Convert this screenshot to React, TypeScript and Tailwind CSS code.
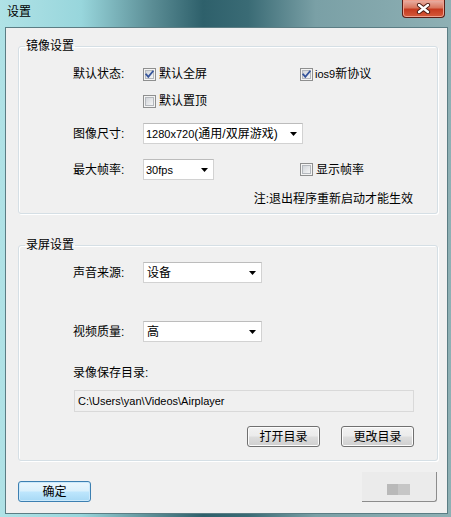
import React from "react";

function Check({ checked }: { checked?: boolean }) {
  return (
    <svg width="13" height="13" viewBox="0 0 13 13" className="shrink-0">
      <defs>
        <linearGradient id="cbg" x1="0" y1="0" x2="1" y2="1">
          <stop offset="0" stopColor="#cfd3d8" />
          <stop offset="1" stopColor="#f7f7f7" />
        </linearGradient>
      </defs>
      <rect x="0.5" y="0.5" width="12" height="12" fill="#f4f4f4" stroke="#8e8f8f" />
      <rect x="2.5" y="2.5" width="8" height="8" fill="url(#cbg)" stroke="#b4b8bd" strokeWidth="1" />
      {checked && (
        <path d="M3.2 6.4 L5.3 8.8 L9.8 3.4" fill="none" stroke="#35549b" strokeWidth="1.8" strokeLinecap="square" />
      )}
    </svg>
  );
}

function Arrow() {
  return (
    <svg width="7" height="4" viewBox="0 0 7 4" className="shrink-0">
      <polygon points="0,0 7,0 3.5,4" fill="#000" />
    </svg>
  );
}

function Select({ className, children }: { className: string; children: React.ReactNode }) {
  return (
    <div className={`h-[21px] bg-white border border-[#d2d2d2] border-t-[#bcbcbc] flex items-center justify-between pl-[2px] pr-[5px] ${className}`}>
      <span className="whitespace-nowrap">{children}</span>
      <Arrow />
    </div>
  );
}

function WinButton({ children, primary }: { children: React.ReactNode; primary?: boolean }) {
  return (
    <div
      className={
        primary
          ? "w-[73px] h-[21px] rounded-[3px] border border-[#3c7fb1] bg-[linear-gradient(180deg,#eaf6fd_0%,#d9f0fc_48%,#bee6fd_52%,#a7d9f5_100%)] shadow-[inset_0_0_0_1px_#cbe9fb] flex items-center justify-center"
          : "w-[73px] h-[21px] rounded-[3px] border border-[#707070] bg-[linear-gradient(180deg,#f2f2f2_0%,#ebebeb_48%,#dddddd_52%,#cfcfcf_100%)] shadow-[inset_0_0_0_1px_#fcfcfc] flex items-center justify-center"
      }
    >
      {children}
    </div>
  );
}

export default function App() {
  return (
    <div className="w-[451px] h-[517px] flex flex-col overflow-hidden bg-[linear-gradient(90deg,#b0e2e6_0%,#98d6dc_18%,#5a8c94_34%,#2e606b_45%,#3a6b75_55%,#7aa0a6_70%,#8eb0b4_100%)] font-['Liberation_Sans','Noto_Sans_CJK_SC',sans-serif] text-[12px] leading-[16px] text-black">
      {/* title bar */}
      <div className="h-[27px] shrink-0 flex items-start">
        <span className="ml-[7px] mt-[4px]">设置</span>
        <div className="ml-auto mr-[6px] w-[43px] h-[18px] rounded-b-[4px] border border-t-0 border-[#5a1d15] bg-[linear-gradient(180deg,#eab3a8_0%,#d9775f_45%,#c63a1f_55%,#d55a3a_100%)] shadow-[inset_0_0_0_1px_#f0a08e] flex items-center justify-center">
          <svg width="15" height="11" viewBox="0 0 15 11">
            <path d="M3 2 L12 9 M12 2 L3 9" stroke="#4a1a12" strokeWidth="4.2" strokeLinecap="round" />
            <path d="M3 2 L12 9 M12 2 L3 9" stroke="#ffffff" strokeWidth="2.4" strokeLinecap="round" />
          </svg>
        </div>
      </div>

      {/* client area */}
      <div className="ml-[5px] w-[443px] flex-1 mb-[3px] border border-[#5b7d84] bg-[#f0f0f0] pl-[12px] pt-[10px] flex flex-col">
        {/* group 1 */}
        <fieldset className="w-[420px] border border-[#d5dfe5] rounded-[3px] pb-[6px] shadow-[inset_1px_1px_0_#ffffff,1px_1px_0_#ffffff]">
          <legend className="ml-[6px] px-[1px] leading-[16px]">镜像设置</legend>
          <div className="pl-[54px]">
            <div className="mt-[10px] h-[20px] flex items-center">
              <span className="w-[70px]">默认状态:</span>
              <label className="w-[157px] flex items-center gap-[3px]">
                <Check checked />
                <span>默认全屏</span>
              </label>
              <label className="flex items-center gap-[2px]">
                <Check checked />
                <span>
                  <span className="text-[11px]">ios9</span>新协议
                </span>
              </label>
            </div>
            <div className="mt-[7px] h-[20px] pl-[70px] flex items-center">
              <label className="flex items-center gap-[3px]">
                <Check />
                <span>默认置顶</span>
              </label>
            </div>
            <div className="mt-[12px] h-[21px] flex items-center">
              <span className="w-[70px]">图像尺寸:</span>
              <Select className="w-[160px]">
                <span className="text-[11px]">1280x720</span>(通用/双屏游戏)
              </Select>
            </div>
            <div className="mt-[15px] h-[21px] flex items-center">
              <span className="w-[70px]">最大帧率:</span>
              <Select className="w-[71px]">
                <span className="text-[11px]">30fps</span>
              </Select>
              <label className="ml-[86px] flex items-center gap-[3px]">
                <Check />
                <span>显示帧率</span>
              </label>
            </div>
            <div className="mt-[11px] h-[16px] w-[340px] flex justify-end">
              <span>注:退出程序重新启动才能生效</span>
            </div>
          </div>
        </fieldset>

        {/* group 2 */}
        <fieldset className="mt-[23px] w-[420px] border border-[#d5dfe5] rounded-[3px] pb-[13px] shadow-[inset_1px_1px_0_#ffffff,1px_1px_0_#ffffff]">
          <legend className="ml-[6px] px-[1px] leading-[16px]">录屏设置</legend>
          <div className="pl-[54px]">
            <div className="mt-[9px] h-[21px] flex items-center">
              <span className="w-[70px]">声音来源:</span>
              <Select className="w-[119px] pl-[3px]">设备</Select>
            </div>
            <div className="mt-[38px] h-[21px] flex items-center">
              <span className="w-[70px]">视频质量:</span>
              <Select className="w-[119px] pl-[3px]">高</Select>
            </div>
            <div className="mt-[23px] h-[16px] flex items-center">
              <span>录像保存目录:</span>
            </div>
            <div className="mt-[9px] ml-[1px] w-[340px] h-[22px] border border-[#d9d9d9] bg-[#f0f0f0] flex items-center pl-[3px]">
              <span className="text-[11px]">C:\Users\yan\Videos\Airplayer</span>
            </div>
            <div className="mt-[14px] w-[341px] flex justify-end gap-[21px]">
              <WinButton>打开目录</WinButton>
              <WinButton>更改目录</WinButton>
            </div>
          </div>
        </fieldset>

        {/* bottom row */}
        <div className="w-[420px] mt-[11px] flex items-end justify-between">
          <WinButton primary>确定</WinButton>
          <div className="mr-[1px] w-[75px] h-[30px] rounded-br-[3px] border-b border-r border-[#8c8c8c] bg-[#ebebeb] flex items-start pt-[12px] pl-[25px]">
            <div className="w-[11px] h-[11px] bg-[#b9b9b9]" />
            <div className="w-[12px] h-[11px] bg-[#c6c6c6]" />
          </div>
        </div>
      </div>
    </div>
  );
}
